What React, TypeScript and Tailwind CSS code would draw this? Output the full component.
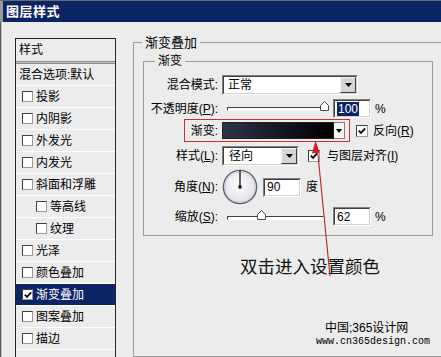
import React from "react";

function Sunken({ className, children }: { className: string; children?: React.ReactNode }) {
  return (
    <div className={"border border-t-[#808080] border-l-[#808080] border-b-white border-r-white " + className}>
      <div className="w-full h-full border border-t-[#404040] border-l-[#404040] border-b-[#d4d0c8] border-r-[#d4d0c8] bg-white flex items-center">
        {children}
      </div>
    </div>
  );
}

function DropBtn() {
  return (
    <div className="w-[16px] h-full shrink-0 border border-t-[#f4f4f4] border-l-[#f4f4f4] border-b-[#404040] border-r-[#404040] bg-[#d6d6d6] flex items-center justify-center">
      <svg width="7" height="4" viewBox="0 0 7 4">
        <polygon points="0,0 7,0 3.5,4" fill="#000" />
      </svg>
    </div>
  );
}

function Tick({ color = "#000" }: { color?: string }) {
  return (
    <svg width="8" height="8" viewBox="0 0 8 8">
      <polyline points="0.8,3.6 3,5.9 7.2,1.4" fill="none" stroke={color} strokeWidth="1.7" />
    </svg>
  );
}

function ListCheck({ checked }: { checked?: boolean }) {
  return (
    <div className="w-[11px] h-[11px] shrink-0 border border-t-[#404040] border-l-[#404040] border-b-[#9a9a9a] border-r-[#9a9a9a] bg-white flex items-center justify-center">
      {checked ? <Tick /> : null}
    </div>
  );
}

function DlgCheck() {
  return (
    <div className="w-[12px] h-[12px] shrink-0 border border-t-[#404040] border-l-[#404040] border-b-[#a0a0a0] border-r-[#a0a0a0] bg-white flex items-center justify-center">
      <Tick />
    </div>
  );
}

function Thumb() {
  return (
    <svg width="9" height="10" viewBox="0 0 9 10">
      <polygon points="0.5,9.5 0.5,4.5 4.5,0.5 8.5,4.5 8.5,9.5" fill="#fff" stroke="#4a4a4a" strokeWidth="1" />
    </svg>
  );
}

const items: { t: string; indent?: boolean; sel?: boolean }[] = [
  { t: "投影" },
  { t: "内阴影" },
  { t: "外发光" },
  { t: "内发光" },
  { t: "斜面和浮雕" },
  { t: "等高线", indent: true },
  { t: "纹理", indent: true },
  { t: "光泽" },
  { t: "颜色叠加" },
  { t: "渐变叠加", sel: true },
  { t: "图案叠加" },
  { t: "描边" },
];

function Label({ children }: { children: React.ReactNode }) {
  return <div className="w-[74px] shrink-0 text-right text-[12px] leading-none whitespace-nowrap">{children}</div>;
}

export default function App() {
  return (
    <div className="w-[441px] h-[357px] overflow-hidden bg-[#ececec] relative flex flex-col text-black font-['Liberation_Sans','Noto_Sans_CJK_SC',sans-serif]">
      <div className="h-[1px] bg-[#6a6a6a] shrink-0" />
      <div className="flex h-[21px] shrink-0">
        <div className="w-[3px] bg-[#9a9a9a]" />
        <div className="flex-1 bg-[#0b2466] text-white font-bold text-[13px] pl-[3px] flex items-center tracking-[0.5px]">
          图层样式
        </div>
      </div>
      <div className="flex flex-1 min-h-0">
        <div className="flex w-[3px] shrink-0">
          <div className="w-[1px] bg-[#5a5a5a]" />
          <div className="w-[1px] bg-[#b8b8b8]" />
          <div className="w-[1px] bg-[#f4f4f4]" />
        </div>
        {/* left list */}
        <div className="pl-[12px] pt-[16px] flex flex-col">
          <div className="w-[101px] flex-1 border border-[#262626] border-b-0 flex flex-col text-[12px]">
            <div className="h-[22px] flex items-center pl-[3px] leading-none">样式</div>
            <div className="h-[3px] border-y border-[#8a8a8a] bg-[#c4c4c4]" />
            <div className="h-[22px] border-b border-white flex items-center pl-[3px] leading-none whitespace-nowrap">
              混合选项:默认
            </div>
            {items.map((it) => (
              <div
                key={it.t}
                className={
                  "h-[22px] border-b border-white flex items-center gap-[3px] leading-none " +
                  (it.indent ? "pl-[20px] " : "pl-[6px] ") +
                  (it.sel ? "bg-[#0b2466] text-white" : "")
                }
              >
                <ListCheck checked={it.sel} />
                <span>{it.t}</span>
              </div>
            ))}
          </div>
        </div>
        {/* right area */}
        <div className="ml-[17px] pt-[12px] flex flex-col">
          <fieldset className="w-[313px] h-[340px] border border-[#9c9c9c] flex flex-col">
            <legend className="ml-[8px] px-[3px] text-[13px] leading-[17px]">渐变叠加</legend>
            <fieldset className="ml-[9px] mt-[2px] w-[290px] border border-[#9c9c9c] pb-[9px] flex flex-col">
              <legend className="ml-[11px] px-[3px] text-[12px] leading-[16px]">渐变</legend>
              {/* blend mode */}
              <div className="flex items-center h-[20px] mt-[6px]">
                <Label>混合模式:</Label>
                <Sunken className="ml-[4px] w-[136px] h-[20px]">
                  <span className="flex-1 pl-[4px] text-[12px] leading-none">正常</span>
                  <DropBtn />
                </Sunken>
              </div>
              {/* opacity */}
              <div className="flex items-center h-[19px] mt-[4px]">
                <Label>
                  不透明度(<u>P</u>):
                </Label>
                <div className="ml-[4px] w-[111px] h-[19px] relative shrink-0">
                  <div className="ml-[5px] mt-[8px] w-[101px] h-[4px] border border-t-[#404040] border-l-[#404040] border-b-white border-r-white bg-white" />
                  <div className="absolute left-[98px] top-[2px] leading-none">
                    <Thumb />
                  </div>
                </div>
                <Sunken className="w-[38px] h-[19px]">
                  <span className="ml-[2px] px-[1px] bg-[#0b2466] text-white text-[12px] leading-[14px]">100</span>
                </Sunken>
                <span className="ml-[4px] text-[12px] leading-none">%</span>
              </div>
              {/* gradient */}
              <div className="flex items-center h-[23px] mt-[1px]">
                <div className="ml-[40px] w-[166px] h-[23px] border border-[#d02a34] flex items-center">
                  <div className="w-[33px] text-right text-[12px] leading-none">渐变:</div>
                  <div className="ml-[4px] flex h-[17px]">
                    <div className="w-[112px] h-full border border-[#202020] bg-[linear-gradient(to_right,#2a3448,#0a0c12_75%,#000)]" />
                    <div className="w-[11px] h-full border border-[#808080] border-l-0 bg-[#f6f6f6] flex items-center justify-center">
                      <svg width="6" height="4" viewBox="0 0 6 4">
                        <polygon points="0,0 6,0 3,4" fill="#000" />
                      </svg>
                    </div>
                  </div>
                </div>
                <div className="ml-[6px]">
                  <DlgCheck />
                </div>
                <span className="ml-[5px] text-[12px] leading-none">
                  反向(<u>R</u>)
                </span>
              </div>
              {/* style */}
              <div className="flex items-center h-[20px] mt-[4px]">
                <Label>
                  样式(<u>L</u>):
                </Label>
                <Sunken className="ml-[4px] w-[77px] h-[20px]">
                  <span className="flex-1 pl-[5px] text-[12px] leading-none">径向</span>
                  <DropBtn />
                </Sunken>
                <div className="ml-[9px]">
                  <DlgCheck />
                </div>
                <span className="ml-[7px] text-[12px] leading-none">
                  与图层对齐(<u>I</u>)
                </span>
              </div>
              {/* angle */}
              <div className="flex items-center h-[36px] mt-[3px]">
                <Label>
                  角度(<u>N</u>):
                </Label>
                <div className="ml-[4px] w-[36px] h-[36px] shrink-0">
                  <svg width="36" height="36" viewBox="0 0 36 36">
                    <defs>
                      <radialGradient id="dg" cx="45%" cy="40%" r="60%">
                        <stop offset="0" stopColor="#fbfbfb" />
                        <stop offset="1" stopColor="#e2e2e6" />
                      </radialGradient>
                    </defs>
                    <circle cx="18" cy="18" r="16.6" fill="url(#dg)" stroke="#5e6274" strokeWidth="1.4" />
                    <circle cx="18" cy="18" r="15.2" fill="none" stroke="#c6c8d2" strokeWidth="0.8" />
                    <line x1="18" y1="18" x2="18" y2="1.5" stroke="#000" strokeWidth="1.2" />
                    <rect x="16.5" y="16.5" width="3" height="3" fill="#000" />
                  </svg>
                </div>
                <Sunken className="ml-[5px] w-[38px] h-[19px]">
                  <span className="pl-[2px] text-[12px] leading-none">90</span>
                </Sunken>
                <span className="ml-[5px] text-[12px] leading-none">度</span>
              </div>
              {/* scale */}
              <div className="flex items-center h-[19px] mt-[2px]">
                <Label>
                  缩放(<u>S</u>):
                </Label>
                <div className="ml-[4px] w-[111px] h-[19px] relative shrink-0">
                  <div className="ml-[5px] mt-[9px] w-[97px] h-[4px] border border-t-[#404040] border-l-[#404040] border-b-white border-r-white bg-white" />
                  <div className="absolute left-[35px] top-[3px] leading-none">
                    <Thumb />
                  </div>
                </div>
                <Sunken className="w-[38px] h-[19px]">
                  <span className="pl-[2px] text-[12px] leading-none">62</span>
                </Sunken>
                <span className="ml-[4px] text-[12px] leading-none">%</span>
              </div>
            </fieldset>
            <div className="ml-[106px] mt-[20px] text-[17.5px] leading-[22px] whitespace-nowrap text-[#111]">
              双击进入设置颜色
            </div>
          </fieldset>
        </div>
      </div>

      {/* red annotation arrow */}
      <svg className="absolute left-0 top-0 pointer-events-none" width="441" height="357" viewBox="0 0 441 357">
        <line x1="317.5" y1="150" x2="330" y2="276" stroke="#b8202c" strokeWidth="1.1" />
        <polygon points="315.5,140.5 312,153.5 319.5,152.5" fill="#d41c26" />
      </svg>

      {/* watermark */}
      <div className="absolute left-[325px] top-[321px] text-[12px] leading-[15px] whitespace-nowrap">中国;365设计网</div>
      <div className="absolute left-[316px] top-[335px] text-[10px] leading-[13px] whitespace-nowrap font-['Liberation_Mono',monospace]">
        www.cn365design.com
      </div>
    </div>
  );
}
